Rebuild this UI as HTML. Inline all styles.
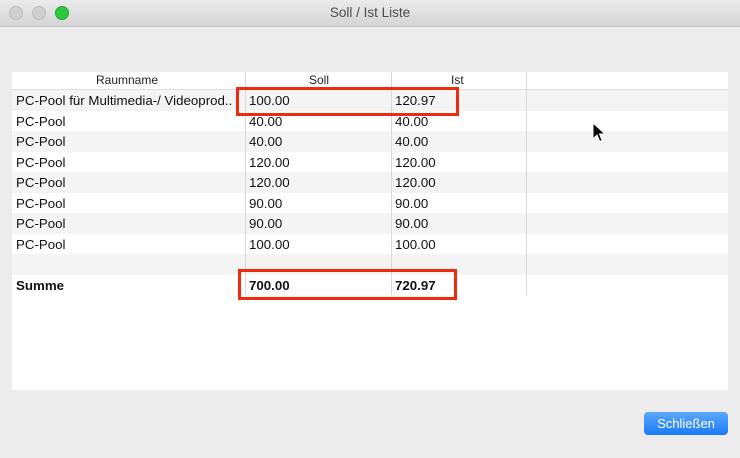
<!DOCTYPE html>
<html><head><style>
body{margin:0;width:740px;height:458px;background:#ececec;font-family:"Liberation Sans",sans-serif;position:relative;overflow:hidden}
.title{position:absolute;left:0;top:0;width:740px;height:26px;background:linear-gradient(#ebebeb,#d5d5d5);border-bottom:1px solid #c4c4c4;text-align:center;line-height:26px;font-size:13.5px;color:#4d4d4d}
.dot{position:absolute;top:6px;width:12px;height:12px;border-radius:50%;background:#d0d0d0;border:0.5px solid #bdbdbd}
.tbl{position:absolute;left:12px;top:72px;width:716px;height:318px;background:#fff}
.hdr{position:absolute;left:0;top:0;width:716px;height:17px;border-bottom:1px solid #e0e0e0;font-size:12px;color:#222}
.row{position:absolute;left:0;width:716px;height:20.5px;font-size:13.3px;color:#111;line-height:22px}
.g{background:#f4f4f4}
.c{position:absolute;top:0}
.vl{position:absolute;top:0;width:1px;background:#d8d8d8}
.red{position:absolute;border:3px solid #f02a10;box-sizing:border-box}
.btn{position:absolute;left:644px;top:412px;width:84px;height:23px;border-radius:4px;background:linear-gradient(#5ca8fb,#1a7af8);color:#fff;font-size:13px;text-align:center;line-height:23px}
</style></head><body>
<div class="title">Soll / Ist Liste</div>
<div class="dot" style="left:9px"></div>
<div class="dot" style="left:32px"></div>
<div class="dot" style="left:55px;background:#2ec840;border-color:#22a531"></div>
<div class="tbl">
<div class="hdr"><span class="c" style="left:84px;top:1px">Raumname</span><span class="c" style="left:297px;top:1px">Soll</span><span class="c" style="left:439px;top:1px">Ist</span></div>
<div class="row g" style="top:18px"><span class="c" style="left:4px">PC-Pool für Multimedia-/ Videoprod..</span><span class="c" style="left:237px">100.00</span><span class="c" style="left:383px">120.97</span></div>
<div class="row" style="top:38.5px"><span class="c" style="left:4px">PC-Pool</span><span class="c" style="left:237px">40.00</span><span class="c" style="left:383px">40.00</span></div>
<div class="row g" style="top:59px"><span class="c" style="left:4px">PC-Pool</span><span class="c" style="left:237px">40.00</span><span class="c" style="left:383px">40.00</span></div>
<div class="row" style="top:79.5px"><span class="c" style="left:4px">PC-Pool</span><span class="c" style="left:237px">120.00</span><span class="c" style="left:383px">120.00</span></div>
<div class="row g" style="top:100px"><span class="c" style="left:4px">PC-Pool</span><span class="c" style="left:237px">120.00</span><span class="c" style="left:383px">120.00</span></div>
<div class="row" style="top:120.5px"><span class="c" style="left:4px">PC-Pool</span><span class="c" style="left:237px">90.00</span><span class="c" style="left:383px">90.00</span></div>
<div class="row g" style="top:141px"><span class="c" style="left:4px">PC-Pool</span><span class="c" style="left:237px">90.00</span><span class="c" style="left:383px">90.00</span></div>
<div class="row" style="top:161.5px"><span class="c" style="left:4px">PC-Pool</span><span class="c" style="left:237px">100.00</span><span class="c" style="left:383px">100.00</span></div>
<div class="row g" style="top:182px"></div>
<div class="row" style="top:202.5px;font-weight:bold"><span class="c" style="left:4px">Summe</span><span class="c" style="left:237px">700.00</span><span class="c" style="left:383px">720.97</span></div>
<div class="vl" style="left:233px;height:223px"></div>
<div class="vl" style="left:379px;height:223px"></div>
<div class="vl" style="left:514px;height:223px"></div>
</div>
<div class="red" style="left:236px;top:87px;width:223px;height:29px"></div>
<div class="red" style="left:238px;top:269px;width:219px;height:31px"></div>
<svg style="position:absolute;left:592px;top:122px" width="16" height="22" viewBox="0 0 16 22"><path d="M1 1 L1 17 L5 13 L7.8 19.5 L10.2 18.5 L7.5 12 L13 12 Z" fill="#000" stroke="#fff" stroke-width="1"/></svg>
<div class="btn">Schließen</div>
</body></html>
